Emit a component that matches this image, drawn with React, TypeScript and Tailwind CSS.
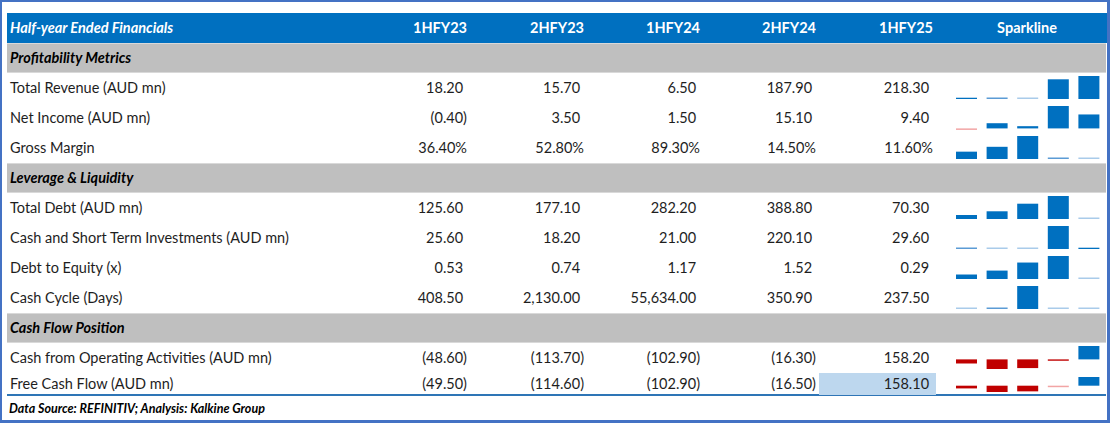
import React from 'react';

// Half-year financials table with Excel-style column sparklines.

type Row = { label: string; values: string[]; nums: number[]; highlightLast?: boolean; short?: boolean };
type Section = { title: string; rows: Row[] };

const PERIODS = ['1HFY23', '2HFY23', '1HFY24', '2HFY24', '1HFY25'];

const SECTIONS: Section[] = [
  {
    title: 'Profitability Metrics',
    rows: [
      { label: 'Total Revenue (AUD mn)', values: ['18.20', '15.70', '6.50', '187.90', '218.30'], nums: [18.2, 15.7, 6.5, 187.9, 218.3] },
      { label: 'Net Income (AUD mn)', values: ['(0.40)', '3.50', '1.50', '15.10', '9.40'], nums: [-0.4, 3.5, 1.5, 15.1, 9.4] },
      { label: 'Gross Margin', values: ['36.40%', '52.80%', '89.30%', '14.50%', '11.60%'], nums: [36.4, 52.8, 89.3, 14.5, 11.6] },
    ],
  },
  {
    title: 'Leverage & Liquidity',
    rows: [
      { label: 'Total Debt (AUD mn)', values: ['125.60', '177.10', '282.20', '388.80', '70.30'], nums: [125.6, 177.1, 282.2, 388.8, 70.3] },
      { label: 'Cash and Short Term Investments (AUD mn)', values: ['25.60', '18.20', '21.00', '220.10', '29.60'], nums: [25.6, 18.2, 21.0, 220.1, 29.6] },
      { label: 'Debt to Equity (x)', values: ['0.53', '0.74', '1.17', '1.52', '0.29'], nums: [0.53, 0.74, 1.17, 1.52, 0.29] },
      { label: 'Cash Cycle (Days)', values: ['408.50', '2,130.00', '55,634.00', '350.90', '237.50'], nums: [408.5, 2130, 55634, 350.9, 237.5] },
    ],
  },
  {
    title: 'Cash Flow Position',
    rows: [
      { label: 'Cash from Operating Activities (AUD mn)', values: ['(48.60)', '(113.70)', '(102.90)', '(16.30)', '158.20'], nums: [-48.6, -113.7, -102.9, -16.3, 158.2] },
      { label: 'Free Cash Flow (AUD mn)', values: ['(49.50)', '(114.60)', '(102.90)', '(16.50)', '158.10'], nums: [-49.5, -114.6, -102.9, -16.5, 158.1], highlightLast: true, short: true },
    ],
  },
];

const GRID = 'grid grid-cols-[343px_120px_117px_116px_116px_117px_170px]';

function Sparkline({ nums, height, top, span }: { nums: number[]; height: number; top: number; span: number }) {
  const min = Math.min(...nums);
  const max = Math.max(...nums);
  const range = max - min || 1;
  const bottom = top + span;
  const hasNeg = min < 0;
  const zero = hasNeg ? top + (max / range) * span : bottom;

  return (
    <svg width={170} height={height} className="block">
      {nums.map((v, i) => {
        const x = 20 + i * 30.6;
        const h = hasNeg ? (Math.abs(v) / range) * span : ((v - min) / range) * span;
        const neg = v < 0;
        const thin = h < 1.2;
        const light = neg ? h < 1 : h < 0.5;
        const dh = thin ? 1.5 : h;
        const y = neg ? zero : zero - dh;
        const fill = neg ? (light ? '#f2a5a5' : '#c00000') : light ? '#a9cbea' : thin ? '#5b9bd5' : '#0070c0';
        return <rect key={i} x={x} y={y} width={21} height={dh} fill={fill} />;
      })}
    </svg>
  );
}

function Value({ text }: { text: string }) {
  const plain = !text.startsWith('(') && !text.endsWith('%');
  return (
    <>
      {text}
      {plain && <span className="invisible">)</span>}
    </>
  );
}

export default function App() {
  return (
    <div
      className="h-[423px] w-[1110px] border-2 border-r-[3px] border-b-[3px] border-[#4472c4] bg-white text-[14.5px] text-[#1e1e1e]"
      style={{ fontFamily: 'Lato, "Open Sans", sans-serif' }}
    >
      <div className="pl-[5px] pt-[11px]">
        <div className={`${GRID} h-[30px] items-center bg-[#0070c0] font-bold text-white`}>
          <div className="pl-[3px] italic">Half-year Ended Financials</div>
          {PERIODS.map((p) => (
            <div key={p} className="pr-[3px] text-right">
              {p}
            </div>
          ))}
          <div className="pl-[12px] text-center">Sparkline</div>
        </div>

        {SECTIONS.map((s) => (
          <React.Fragment key={s.title}>
            <div className="flex h-[30px] w-[1099px] items-center border-y border-[#d9d9d9] bg-[#bfbfbf] pl-[3px] font-bold italic text-black">
              {s.title}
            </div>
            {s.rows.map((r) => (
              <div key={r.label} className={`${GRID} ${r.short ? 'h-[21px]' : 'h-[30px]'} items-center`}>
                <div className="pl-[3px]">{r.label}</div>
                {r.values.map((v, i) => (
                  <div
                    key={i}
                    className={`flex h-full items-center justify-end pr-[3px] ${r.highlightLast && i === 4 ? 'bg-[#bdd7ee]' : ''}`}
                  >
                    <span>
                      <Value text={v} />
                    </span>
                  </div>
                ))}
                {r.short ? (
                  <Sparkline nums={r.nums} height={21} top={4} span={15} />
                ) : (
                  <Sparkline nums={r.nums} height={30} top={3} span={23} />
                )}
              </div>
            ))}
          </React.Fragment>
        ))}

        <div className="h-[2px] w-[1099px] bg-[#2e75b6]" />
        <div className="flex h-[26px] items-center pl-[2px] text-[12.5px] font-bold italic text-black">
          Data Source: REFINITIV; Analysis: Kalkine Group
        </div>
      </div>
    </div>
  );
}
